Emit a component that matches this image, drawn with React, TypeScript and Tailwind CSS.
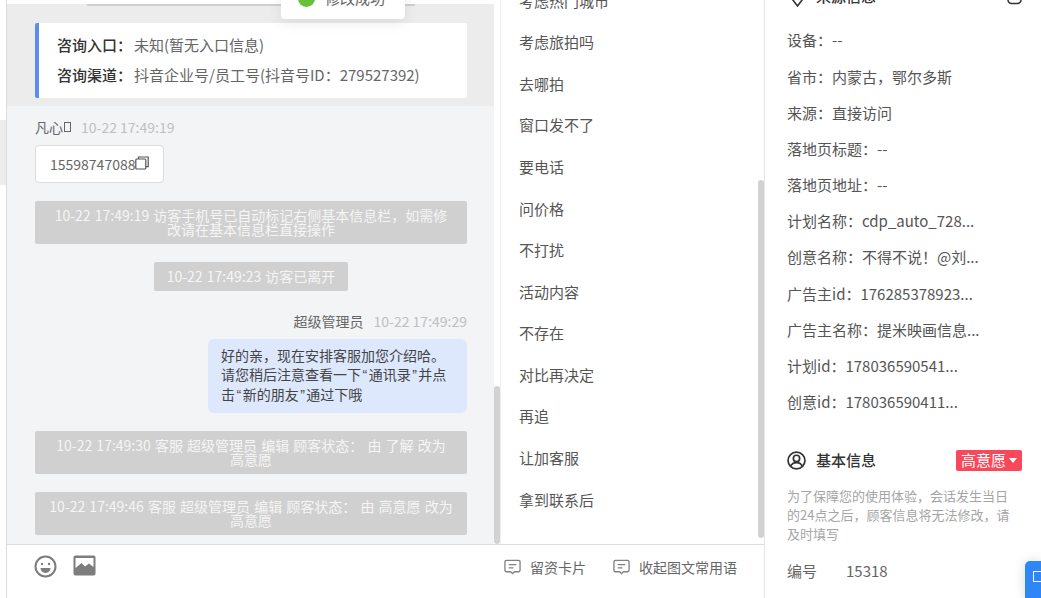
import React from 'react';

const phrases = ['考虑热门城市', '考虑旅拍吗', '去哪拍', '窗口发不了', '要电话', '问价格', '不打扰', '活动内容', '不存在', '对比再决定', '再追', '让加客服', '拿到联系后'];

const sourceRows = [
  '设备：--',
  '省市：内蒙古，鄂尔多斯',
  '来源：直接访问',
  '落地页标题：--',
  '落地页地址：--',
  '计划名称：cdp_auto_728...',
  '创意名称：不得不说！@刘...',
  '广告主id：176285378923...',
  '广告主名称：提米映画信息...',
  '计划id：178036590541...',
  '创意id：178036590411...',
];

const SystemNote = ({ children, className = '' }: { children: React.ReactNode; className?: string }) => (
  <div className={`whitespace-nowrap rounded-[2px] bg-[#d0d0d0] py-[7px] text-center text-[14px] leading-[14px] text-[#f5f5f5] [word-spacing:1px] ${className}`}>
    {children}
  </div>
);

const Quote = ({ children }: { children: React.ReactNode }) => (
  <span className="px-[1.5px] font-['Liberation_Sans']">{children}</span>
);

const CardIcon = () => (
  <svg width="17" height="16" viewBox="0 0 18 16" fill="none" stroke="#808080" strokeWidth="1.4">
    <path d="M2.500 1h13a1.500 1.500 0 0 1 1.500 1.500v9a1.500 1.500 0 0 1-1.500 1.500H11l-2 2-2-2H2.500A1.500 1.500 0 0 1 1 11.500v-9A1.500 1.500 0 0 1 2.500 1z" />
    <path d="M5 5.500h8M5 9h5" />
  </svg>
);

export default function App() {
  return (
    <div className="flex h-[598px] w-[1041px] overflow-hidden bg-white font-['Noto_Sans_CJK_SC',sans-serif] text-[14px] text-[#4b4b4b]">
      {/* far left strip */}
      <div className="flex w-[7px] shrink-0 flex-col border-r border-[#dcdcdc] pt-[120px]">
        <div className="h-[65px] w-[6px] bg-[#ececec]" />
      </div>

      {/* chat + phrases */}
      <div className="flex w-[758px] shrink-0 flex-col border-r border-[#e5e5e5]">
        <div className="flex min-h-0 flex-1">
          {/* chat */}
          <div className="relative flex w-[487px] shrink-0 flex-col bg-[#f3f4f6]">
            <div className="h-[4px] bg-white" />
            <div className="bg-[#ececec] pb-[8px] pl-[28px] pr-[27px] pt-[19px]">
              <div className="rounded-[2px] border-l-4 border-[#5b8def] bg-white pb-[8px] pl-[18px] pt-[7px] text-[15px] leading-[30px] text-[#666]">
                <div><b className="mr-[2px] font-medium text-[#333]">咨询入口：</b>未知(暂无入口信息)</div>
                <div><b className="mr-[2px] font-medium text-[#333]">咨询渠道：</b>抖音企业号/员工号(抖音号ID：279527392)</div>
              </div>
            </div>
            <div className="absolute left-[80px] top-[4px] h-[2px] w-[328px] bg-[#cfcfcf]" />

            <div className="flex flex-1 flex-col pl-[28px] pr-[27px] pt-[13px]">
              <div className="flex h-[16px] items-center gap-[10px]">
                <span className="flex items-center gap-[1px] text-[#666]">
                  凡心
                  <span className="h-[10px] w-[7px] border border-[#666]" />
                </span>
                <span className="text-[#c0c0c0]">10-22 17:49:19</span>
              </div>
              <div className="mt-[10px] flex h-[38px] w-[129px] items-center rounded-[4px] border border-[#dcdcdc] bg-white pl-[14px] text-[#666]">
                15598747088
                <svg width="14" height="14" viewBox="0 0 14 14" fill="none" stroke="#555" strokeWidth="1.2" className="-mt-[2px]">
                  <rect x="0.8" y="3" width="10" height="10" rx="1" />
                  <path d="M3.500 3V1h9.700v9.700H11" />
                </svg>
              </div>
              <SystemNote className="mt-[18px] h-[43px]">10-22 17:49:19 访客手机号已自动标记右侧基本信息栏，如需修<br />改请在基本信息栏直接操作</SystemNote>
              <SystemNote className="mt-[18px] h-[29px] self-center px-[13px]">10-22 17:49:23 访客已离开</SystemNote>
              <div className="mt-[22px] flex h-[16px] items-center justify-end gap-[10px]">
                <span className="text-[#666]">超级管理员</span>
                <span className="text-[#c0c0c0]">10-22 17:49:29</span>
              </div>
              <div className="mt-[10px] h-[74px] w-[259px] self-end whitespace-nowrap rounded-[6px] bg-[#dde8fd] px-[13px] py-[7px] leading-[19px] text-[#444]">
                好的亲，现在安排客服加您介绍哈。<br />
                请您稍后注意查看一下<Quote>“</Quote>通讯录<Quote>”</Quote>并点<br />
                击<Quote>“</Quote>新的朋友<Quote>”</Quote>通过下哦
              </div>
              <SystemNote className="mt-[18px] h-[43px]">10-22 17:49:30 客服 超级管理员 编辑 顾客状态： 由 了解 改为<br />高意愿</SystemNote>
              <SystemNote className="mt-[18px] h-[43px]">10-22 17:49:46 客服 超级管理员 编辑 顾客状态： 由 高意愿 改为<br />高意愿</SystemNote>
            </div>

            {/* toast */}
            <div className="absolute left-[274px] top-[-22px] flex h-[41px] w-[124px] items-center gap-[10px] rounded-[4px] bg-white pl-[17px] text-[15px] text-[#666] shadow-[0_4px_14px_rgba(0,0,0,0.08)]">
              <span className="h-[17px] w-[17px] rounded-full bg-[#67c23a]" />
              修改成功
            </div>
          </div>

          {/* chat scrollbar */}
          <div className="flex w-[7px] shrink-0 flex-col justify-end border-r border-[#eeeeee] bg-white">
            <div className="h-[158px] w-[6px] rounded-[3px] bg-[#d2d2d2]" />
          </div>

          {/* phrases */}
          <div className="relative flex-1 overflow-hidden">
            <div className="-mt-[20px] flex flex-col pl-[18px] text-[15px]">
              {phrases.map((p) => (
                <div key={p} className="flex h-[41.6px] items-center text-[#555]">{p}</div>
              ))}
            </div>
            <div className="absolute right-0 top-[180px] h-[358px] w-[6px] rounded-[3px] bg-[#d2d2d2]" />
          </div>
        </div>

        {/* toolbar */}
        <div className="flex h-[54px] shrink-0 justify-between border-t border-[#dcdcdc] bg-white pl-[27px] pr-[27px]">
          <div className="flex items-start gap-[16px] pt-[10px]">
            <svg width="23" height="23" viewBox="0 0 23 23" fill="none" stroke="#7d7d7d" strokeWidth="2">
              <circle cx="11.500" cy="11.500" r="10" />
              <circle cx="8" cy="9" r="1.200" fill="#7d7d7d" stroke="none" />
              <circle cx="15" cy="9" r="1.200" fill="#7d7d7d" stroke="none" />
              <path d="M6.500 13h10a5 5 0 0 1-10 0z" fill="#7d7d7d" stroke="none" />
            </svg>
            <svg width="23" height="21" viewBox="0 0 23 21">
              <rect x="0.500" y="0.500" width="22" height="20" rx="2" fill="#7d7d7d" />
              <path d="M2.500 3h18v9l-4.500-3.500-4 3-3.500-3.500-6 5z" fill="#fff" />
            </svg>
          </div>
          <div className="flex gap-[27px] pt-[13px] text-[#666]">
            <div className="flex h-[18px] items-center gap-[9px]"><CardIcon />留资卡片</div>
            <div className="flex h-[18px] items-center gap-[9px]"><CardIcon />收起图文常用语</div>
          </div>
        </div>
      </div>

      {/* right info */}
      <div className="relative flex-1 overflow-hidden pl-[22px] pr-[19px]">
        <div className="-mt-[13px] flex h-[18px] items-center justify-between text-[15px] font-medium text-[#333]">
          <div className="flex items-center gap-[11px] pl-[3px]">
            <svg width="15" height="18" viewBox="0 0 15 18" fill="none" stroke="#333" strokeWidth="1.600" className="mt-[4px]">
              <path d="M1 3.500 7.500 1 14 3.500v5L7.500 17 1 8.500z" />
            </svg>
            来源信息
          </div>
          <svg width="15" height="16" viewBox="0 0 15 16" fill="none" stroke="#333" strokeWidth="1.500" className="mt-[1px]">
            <path d="M1 5h13v6a3.500 3.500 0 0 1-3.500 3.500h-6A3.500 3.500 0 0 1 1 11z" />
          </svg>
        </div>
        <div className="mt-[17.5px] flex flex-col text-[15px] text-[#555]">
          {sourceRows.map((r) => (
            <div key={r} className="flex h-[36.2px] items-center whitespace-nowrap">{r}</div>
          ))}
        </div>
        <div className="mt-[28.5px] flex h-[22px] items-center justify-between">
          <div className="flex items-center gap-[10px] text-[15px] font-medium text-[#333]">
            <svg width="19" height="19" viewBox="0 0 18 18" fill="none" stroke="#333" strokeWidth="1.600">
              <circle cx="9" cy="9" r="8" />
              <circle cx="9" cy="7" r="3" />
              <path d="M3.500 14.500c1-2.500 3-3.500 5.500-3.500s4.500 1 5.500 3.500" />
            </svg>
            基本信息
          </div>
          <div className="flex h-[21px] w-[66px] items-center justify-center gap-[3px] rounded-[2px] bg-[#f9485a] text-[15px] text-white">
            高意愿
            <span className="h-0 w-0 border-x-[4px] border-t-[5px] border-x-transparent border-t-white" />
          </div>
        </div>
        <div className="mt-[15px] w-[230px] text-[13px] leading-[19px] text-[#a5a5a5]">
          为了保障您的使用体验，会话发生当日的24点之后，顾客信息将无法修改，请及时填写
        </div>
        <div className="mt-[17px] flex gap-[29px] text-[15px] text-[#666]"><span>编号</span><span>15318</span></div>
        <div className="absolute bottom-0 right-0 flex h-[37px] w-[16px] items-start justify-end rounded-tl-[5px] bg-[#2f86f6] pt-[10px] shadow-[0_0_12px_rgba(0,0,0,0.15)]">
          <span className="h-[11px] w-[8px] rounded-l-[1px] border border-r-0 border-white" />
        </div>
      </div>
    </div>
  );
}
